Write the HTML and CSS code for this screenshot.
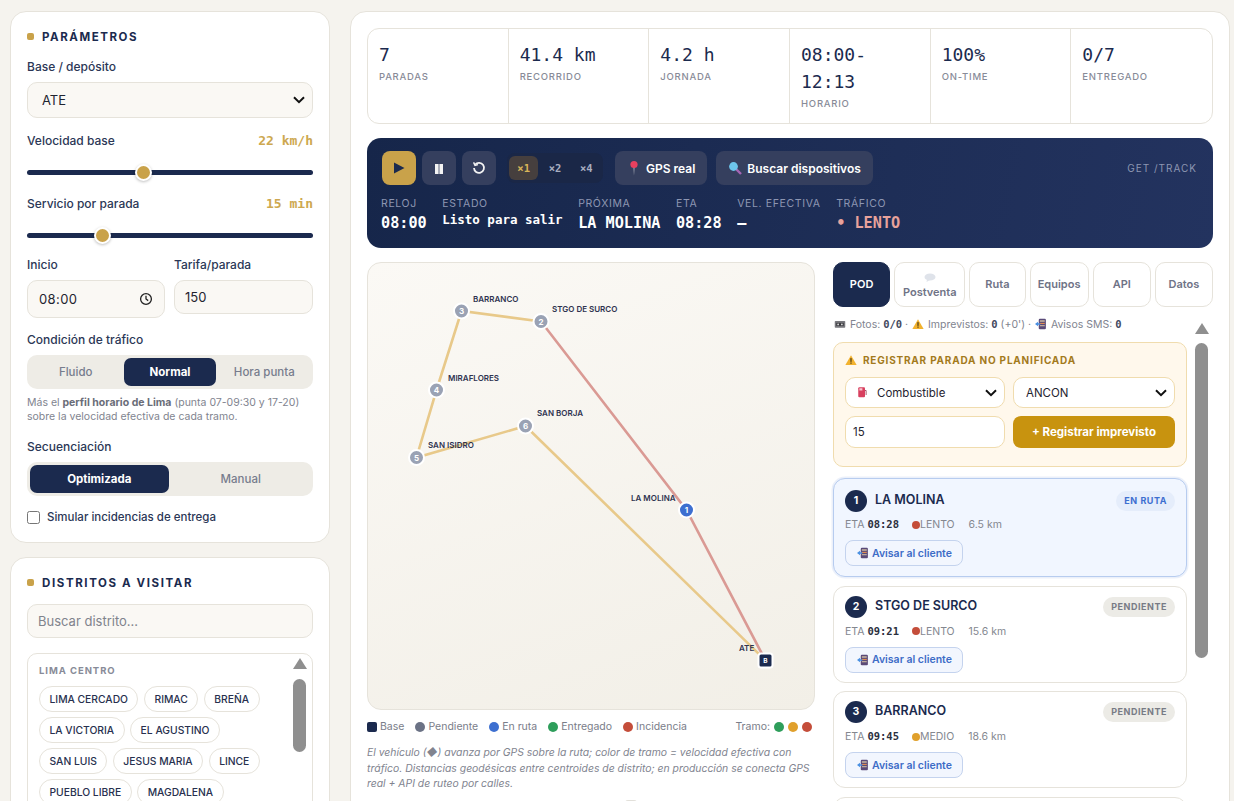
FILE: index.html
```html
<!doctype html>
<html lang="es">
<head>
<meta charset="utf-8" />
<meta name="viewport" content="width=device-width,initial-scale=1" />
<title>Ruteo Lima</title>
<link rel="stylesheet" href="styles.css">
</head>
<body>

<svg class="sprite" aria-hidden="true">
  <symbol id="i-warn" viewBox="0 0 16 16"><path d="M8 1.5 15.5 14.5H.5Z" fill="#f2b22e"/><rect x="7.2" y="5.5" width="1.6" height="5" fill="#4a3a16"/><rect x="7.2" y="11.3" width="1.6" height="1.7" fill="#4a3a16"/></symbol>
  <symbol id="i-phone" viewBox="0 0 16 16"><rect x="5" y="1" width="9.5" height="14" rx="1.5" fill="#5a4a78"/><rect x="6.5" y="3" width="6.5" height="2" fill="#c9b8a0"/><rect x="6.5" y="6.5" width="6.5" height="1.5" fill="#e08a50"/><rect x="6.5" y="9.5" width="6.5" height="1.5" fill="#c9b8a0"/><path d="M0 8 4 5V7H7V9H4V11Z" fill="#4a90e2"/></symbol>
  <symbol id="i-tape" viewBox="0 0 16 16"><rect x="1" y="4" width="14" height="9" rx="1" fill="#77777c"/><rect x="3" y="6.5" width="10" height="4" fill="#3c3c40"/><circle cx="5.5" cy="8.5" r="1.2" fill="#ddd"/><circle cx="10.5" cy="8.5" r="1.2" fill="#ddd"/></symbol>
  <symbol id="i-fuel" viewBox="0 0 16 16"><rect x="3" y="1.5" width="9" height="13.5" rx="1.5" fill="#d8405f"/><rect x="4.5" y="3" width="4" height="3" fill="#f7c4cf"/><path d="M12 6h1.5v6" stroke="#8a2a40" stroke-width="1" fill="none"/></symbol>
</svg>

<div class="app">

  <aside class="side">
    <section class="card">
      <h2 class="sec-title"><i class="sec-dot"></i>Parámetros</h2>

      <label class="lbl">Base / depósito</label>
      <select class="fld sel-base"><option>ATE</option></select>

      <div class="lbl-row"><label class="lbl">Velocidad base</label><span class="val">22 km/h</span></div>
      <input class="range" type="range" min="10" max="40" value="22">

      <div class="lbl-row"><label class="lbl">Servicio por parada</label><span class="val">15 min</span></div>
      <input class="range" type="range" min="5" max="45" value="15">

      <div class="two">
        <div>
          <label class="lbl">Inicio</label>
          <div class="fld time-fld"><span>08:00</span>
            <svg width="14" height="14" viewBox="0 0 14 14" fill="none" stroke="#222" stroke-width="1.3"><circle cx="7" cy="7" r="5.4"/><path d="M7 3.8V7l2.2 1.6"/></svg>
          </div>
        </div>
        <div>
          <label class="lbl">Tarifa/parada</label>
          <input class="fld num-fld" value="150">
        </div>
      </div>

      <label class="lbl lbl-gap">Condición de tráfico</label>
      <div class="seg seg-3">
        <button>Fluido</button><button class="on">Normal</button><button>Hora punta</button>
      </div>
      <p class="help">Más el <b>perfil horario de Lima</b> (punta 07-09:30 y 17-20) sobre la velocidad efectiva de cada tramo.</p>

      <label class="lbl lbl-gap2">Secuenciación</label>
      <div class="seg seg-2">
        <button class="on">Optimizada</button><button>Manual</button>
      </div>
      <label class="check"><input type="checkbox">Simular incidencias de entrega</label>
    </section>

    <section class="card">
      <h2 class="sec-title sec-tight"><i class="sec-dot"></i>Distritos a visitar</h2>
      <input class="fld search" placeholder="Buscar distrito...">
      <div class="dist-box">
        <div class="dist-list">
          <div class="zone">Lima Centro</div>
          <div class="chips">
            <span class="chip">LIMA CERCADO</span><span class="chip">RIMAC</span><span class="chip">BREÑA</span>
            <span class="chip">LA VICTORIA</span><span class="chip">EL AGUSTINO</span>
            <span class="chip">SAN LUIS</span><span class="chip">JESUS MARIA</span><span class="chip">LINCE</span>
            <span class="chip">PUEBLO LIBRE</span><span class="chip">MAGDALENA</span>
          </div>
        </div>
        <div class="sbar sbar-small"><i class="sbar-up"></i><i class="sbar-thumb"></i></div>
      </div>
    </section>
  </aside>

  <main class="card main">
    <div class="kpis">
      <div class="kpi"><b>7</b><span>Paradas</span></div>
      <div class="kpi"><b>41.4 km</b><span>Recorrido</span></div>
      <div class="kpi"><b>4.2 h</b><span>Jornada</span></div>
      <div class="kpi"><b>08:00-<br>12:13</b><span>Horario</span></div>
      <div class="kpi"><b>100%</b><span>On-time</span></div>
      <div class="kpi"><b>0/7</b><span>Entregado</span></div>
    </div>

    <div class="player">
      <div class="ctrl-row">
        <button class="pbtn play"><svg width="12" height="12" viewBox="0 0 12 12"><path d="M1 .5 11.5 6 1 11.5Z" fill="#1b2a4e"/></svg></button>
        <button class="pbtn"><svg width="12" height="12" viewBox="0 0 12 12" fill="#f3f3f3"><rect x="2" y="2" width="3.6" height="10"/><rect x="6.4" y="2" width="3.6" height="10"/></svg></button>
        <button class="pbtn"><svg width="14" height="14" viewBox="0 0 14 14" fill="none" stroke="#f3f3f3" stroke-width="1.8"><path d="M3.2 3.6A5 5 0 1 1 2 7"/><path d="M1.6 1.4 3 4.4l3-.8" stroke-width="1.4"/></svg></button>
        <div class="speed"><span class="on">×1</span><span>×2</span><span>×4</span></div>
        <button class="pill"><svg width="14" height="16" viewBox="0 0 14 16"><path d="M6.4 7h1.2L7 15.5Z" fill="#b0b4c0"/><circle cx="7" cy="4.5" r="3.6" fill="#e8405f"/></svg>GPS real</button>
        <button class="pill"><svg width="14" height="14" viewBox="0 0 14 14"><path d="M8 8l5 5" stroke="#a565b5" stroke-width="2.4"/><circle cx="5.5" cy="5.5" r="4.4" fill="#6cc4ea"/></svg>Buscar dispositivos</button>
        <span class="endpoint">GET /TRACK</span>
      </div>
      <div class="read-row">
        <div class="read"><span>Reloj</span><b>08:00</b></div>
        <div class="read"><span>Estado</span><b class="sm">Listo para salir</b></div>
        <div class="read"><span>Próxima</span><b>LA MOLINA</b></div>
        <div class="read"><span>ETA</span><b>08:28</b></div>
        <div class="read"><span>Vel. efectiva</span><b>–</b></div>
        <div class="read"><span>Tráfico</span><b class="slow">• LENTO</b></div>
      </div>
    </div>

    <div class="lower">
      <div class="map-col">
        <div class="map">
          <svg class="route" width="446" height="446" viewBox="368 263 446 446">
            <g fill="none" stroke-width="2.6">
              <path d="M765.5 660.5 686.5 510 541 321.5" stroke="#da9a94"/>
              <path d="M541 321.5 461.5 311 436.5 390 416.5 457.5 525.5 426 765.5 660.5" stroke="#e8c98a"/>
            </g>
            <g class="node" fill="#9aa2b4">
              <circle cx="541" cy="321.5" r="7.5"/><circle cx="461.5" cy="311" r="7.5"/>
              <circle cx="436.5" cy="390" r="7.5"/><circle cx="416.5" cy="457.5" r="7.5"/>
              <circle cx="525.5" cy="426" r="7.5"/>
              <circle cx="686.5" cy="510" r="7.5" fill="#3d6fd0"/>
              <rect x="758.5" y="653.5" width="14" height="14" rx="2.5" fill="#1b2a4e"/>
            </g>
            <g class="num">
              <text x="686.5" y="513">1</text><text x="541" y="324.5">2</text><text x="461.5" y="314">3</text>
              <text x="436.5" y="393">4</text><text x="416.5" y="460.5">5</text><text x="525.5" y="429">6</text>
              <text class="b" x="765.5" y="663">B</text>
            </g>
            <g class="tag">
              <text x="473" y="302">BARRANCO</text><text x="552" y="312">STGO DE SURCO</text>
              <text x="448" y="381">MIRAFLORES</text><text x="537" y="416">SAN BORJA</text>
              <text x="428" y="448">SAN ISIDRO</text><text x="631" y="501">LA MOLINA</text>
              <text x="739" y="651">ATE</text>
            </g>
          </svg>
        </div>
        <div class="legend">
          <span class="leg"><i class="sq"></i>Base</span>
          <span class="leg"><i style="background:#6b7285"></i>Pendiente</span>
          <span class="leg"><i style="background:#3d6fd0"></i>En ruta</span>
          <span class="leg"><i style="background:#2e9e5b"></i>Entregado</span>
          <span class="leg"><i style="background:#c44d3a"></i>Incidencia</span>
          <span class="leg tramo">Tramo: <i style="background:#2e9e5b"></i><i style="background:#e0a02c"></i><i style="background:#c44d3a"></i></span>
        </div>
        <p class="note">El vehículo (◆) avanza por GPS sobre la ruta; color de tramo = velocidad efectiva con tráfico. Distancias geodésicas entre centroides de distrito; en producción se conecta GPS real + API de ruteo por calles.</p>
        <div class="map-foot"></div>
      </div>

      <div class="right-col">
        <div class="tabs">
          <button class="on">POD</button>
          <button class="tab-post"><svg width="12" height="9" viewBox="0 0 12 9"><ellipse cx="6" cy="4" rx="5.5" ry="3.6" fill="#dfe3ea"/><path d="M3 6.5 2.5 9 6 7Z" fill="#dfe3ea"/></svg>Postventa</button>
          <button>Ruta</button><button>Equipos</button><button>API</button><button>Datos</button>
        </div>
        <div class="pane">
          <div class="pane-list">
            <div class="stats">
              <svg class="ico"><use href="#i-tape"/></svg> Fotos: <b>0/0</b> · <svg class="ico"><use href="#i-warn"/></svg> Imprevistos: <b>0</b> (+0') · <svg class="ico"><use href="#i-phone"/></svg> Avisos SMS: <b>0</b>
            </div>

            <div class="alert">
              <div class="alert-title"><svg class="ico"><use href="#i-warn"/></svg>Registrar parada no planificada</div>
              <div class="alert-grid">
                <div class="fake-sel"><select class="fld sel-sm pad-ico"><option>Combustible</option></select><svg class="ico sel-ico"><use href="#i-fuel"/></svg></div>
                <select class="fld sel-sm"><option>ANCON</option></select>
                <input class="fld in-sm" value="15">
                <button class="reg">+ Registrar imprevisto</button>
              </div>
            </div>

            <div class="stops">
              <div class="stop active">
                <div class="stop-top"><i class="circ">1</i><strong>LA MOLINA</strong><span class="badge blue">En ruta</span></div>
                <div class="meta">ETA <b>08:28</b> <i class="dot" style="background:#c44d3a"></i>LENTO <em>6.5 km</em></div>
                <button class="notify"><svg class="ico"><use href="#i-phone"/></svg>Avisar al cliente</button>
              </div>
              <div class="stop">
                <div class="stop-top"><i class="circ">2</i><strong>STGO DE SURCO</strong><span class="badge">Pendiente</span></div>
                <div class="meta">ETA <b>09:21</b> <i class="dot" style="background:#c44d3a"></i>LENTO <em>15.6 km</em></div>
                <button class="notify"><svg class="ico"><use href="#i-phone"/></svg>Avisar al cliente</button>
              </div>
              <div class="stop">
                <div class="stop-top"><i class="circ">3</i><strong>BARRANCO</strong><span class="badge">Pendiente</span></div>
                <div class="meta">ETA <b>09:45</b> <i class="dot" style="background:#e0a02c"></i>MEDIO <em>18.6 km</em></div>
                <button class="notify"><svg class="ico"><use href="#i-phone"/></svg>Avisar al cliente</button>
              </div>
              <div class="stop stop-next"></div>
            </div>
          </div>
          <div class="sbar"><i class="sbar-up"></i><i class="sbar-thumb"></i></div>
        </div>
      </div>
    </div>
  </main>

</div>

</body>
</html>
```

FILE: styles.css
```css
*{box-sizing:border-box}
html,body{height:100%}
body{margin:0;background:#f5f3ee;font-family:Inter,"Noto Sans",Arial,sans-serif;color:#1b2a4e;overflow:hidden}
button,input,select{font-family:inherit}
.sprite{display:none}
.ico{width:12px;height:12px;vertical-align:-2px}

.app{display:grid;grid-template-columns:320px 880px;gap:20px;padding:11px 0 0 10px;height:801px;overflow:hidden;align-items:start}
.side{display:flex;flex-direction:column;gap:14px}
.card{background:#fff;border:1px solid #e6e3db;border-radius:16px;padding:16px}

.sec-title{margin:0 0 14px;height:17px;display:flex;align-items:center;font-size:11.5px;font-weight:700;letter-spacing:.135em;text-transform:uppercase;color:#1b2a4e}
.sec-tight{margin-bottom:13px;letter-spacing:.14em}
.sec-dot{width:7px;height:7px;border-radius:2px;background:#c9a24a;margin-right:8px}

.lbl{display:block;font-size:12px;line-height:15px;font-weight:500;color:#2b3756;margin-bottom:8px}
.lbl-row{display:flex;justify-content:space-between;align-items:center;margin-top:15px}
.lbl-row .lbl{margin:0}
.val{font:700 13px/15px "DejaVu Sans Mono",monospace;color:#cda850}
.lbl-gap{margin:14px 0 8px}
.lbl-gap2{margin:15px 0 8px}

.fld{display:block;width:100%;background:#faf8f4;border:1px solid #e6e3db;border-radius:10px;font-size:13px;color:#1f2430;outline:none}
select.fld{-webkit-appearance:none;appearance:none;background-image:url("data:image/svg+xml,%3Csvg xmlns='http://www.w3.org/2000/svg' width='12' height='8' viewBox='0 0 12 8'%3E%3Cpath d='M1 1.2 6 6.2 11 1.2' fill='none' stroke='%23111' stroke-width='2'/%3E%3C/svg%3E");background-repeat:no-repeat;background-position:right 7px center}
.sel-base{height:36px;padding:0 14px}
.two{display:grid;grid-template-columns:138px 139px;gap:9px;margin-top:13px;align-items:start}
.two .lbl{margin-bottom:8px}
.time-fld{height:38px;padding:0 11px;display:flex;align-items:center;justify-content:space-between;letter-spacing:.03em}
.num-fld{height:34px;padding:0 10px}

.range{-webkit-appearance:none;appearance:none;display:block;width:100%;height:17px;margin:16px 0 0;background:transparent}
.range::-webkit-slider-runnable-track{height:5px;border-radius:3px;background:#1b2a4e}
.range::-webkit-slider-thumb{-webkit-appearance:none;width:17px;height:17px;margin-top:-6px;border-radius:50%;background:#c9a24a;border:2px solid #fff;box-shadow:0 1px 3px rgba(0,0,0,.25)}

.seg{display:grid;gap:3px;padding:3px;background:#eeece6;border-radius:10px;height:34px}
.seg-3{grid-template-columns:repeat(3,1fr)}
.seg-2{grid-template-columns:repeat(2,1fr)}
.seg button{border:0;background:none;border-radius:7px;font-size:11.5px;font-weight:500;color:#777c8d;padding:0}
.seg button.on{background:#1b2a4e;color:#fff;font-weight:700}
.help{margin:7px 0 0;font-size:10.5px;line-height:14px;color:#81848f}
.help b{font-weight:700;color:#6a6d78}
.check{display:flex;align-items:center;gap:7px;margin:13px 0 1px;font-size:11.5px;line-height:16px;font-weight:500;color:#2b3756}
.check input{width:13px;height:13px;margin:0}

.search{height:34px;padding:0 10px;margin-bottom:15px;font-size:13px}
.search::placeholder{color:#80838c}
.dist-box{display:flex;border:1px solid #e6e3db;border-radius:10px;height:200px;padding:11px 5px 0 11px}
.dist-list{flex:1}
.zone{font-size:9.5px;line-height:12px;font-weight:700;letter-spacing:.1em;text-transform:uppercase;color:#888b98}
.chips{display:flex;flex-wrap:wrap;gap:5px 5.5px;margin-top:8.5px;padding-right:20px}
.chip{height:26px;line-height:24px;padding:0 9.5px;border:1px solid #e6e3db;border-radius:13px;font-size:10.3px;font-weight:500;color:#27304e;white-space:nowrap}

.sbar{flex:none;width:15px;margin:0 4px 0 7px;padding-top:5px;display:flex;flex-direction:column;align-items:center}
.sbar-up{width:0;height:0;border:7.5px solid transparent;border-top:0;border-bottom:11px solid #8f8f8f}
.sbar-thumb{width:13px;height:315px;margin-top:9px;border-radius:7px;background:#8f8f8f}
.sbar-small{margin:-7px 0 0 0;padding-top:0;width:15px}
.sbar-small .sbar-thumb{height:73px;margin-top:10px}

.main{height:860px;padding:16px}
.kpis{display:grid;grid-template-columns:repeat(6,1fr);border:1px solid #e6e3db;border-radius:12px;height:96px}
.kpi{padding:12px 11px 0;border-right:1px solid #e6e3db}
.kpi:last-child{border-right:0}
.kpi b{display:block;font:500 18px/27px "DejaVu Sans Mono",monospace;color:#1b2a4e}
.kpi span{display:block;margin-top:1px;font-size:9.5px;line-height:15px;font-weight:500;letter-spacing:.08em;text-transform:uppercase;color:#888b98}

.player{margin-top:14px;height:110px;padding:13px 16px 0 15px;border-radius:14px;background:linear-gradient(100deg,#16264a,#23335f)}
.ctrl-row{display:flex;align-items:center;gap:6px;height:34px}
.pbtn{width:34px;height:34px;border:0;border-radius:8px;background:#353f5e;display:flex;align-items:center;justify-content:center;padding:0}
.pbtn.play{background:#c9a24a}
.speed{display:flex;align-items:center;gap:2px;margin:0 6px 0 5px;height:30px;padding:0 2px;width:96px;background:#1a2747;border-radius:8px}
.speed span{flex:1;height:24px;line-height:24px;text-align:center;font:700 10.5px/24px "DejaVu Sans Mono",monospace;color:#a8aec0;border-radius:6px}
.speed span.on{background:#463f3e;color:#d9b659}
.pill{display:flex;align-items:center;gap:5px;height:34px;padding:0 12px;margin-right:3px;border:0;border-radius:8px;background:#353f5e;color:#fff;font-size:12px;font-weight:600}
.endpoint{margin-left:auto;font-size:10px;letter-spacing:.1em;color:#8d96b2}
.read-row{display:flex;gap:15.5px;margin:12px 0 0 -1px}
.read span{display:block;font-size:10.5px;line-height:13px;letter-spacing:.06em;text-transform:uppercase;color:#8d96b2;margin-bottom:3px}
.read b{display:block;font:700 15.2px/20px "DejaVu Sans Mono",monospace;color:#fff;white-space:nowrap}
.read b.sm{font-size:12.5px;line-height:16px;margin-top:-1px}
.read b.slow{color:#e8a29b}

.lower{display:grid;grid-template-columns:448px 380px;gap:18px;margin-top:14px}
.map{height:448px;border:1px solid #e6e3db;border-radius:14px;background:linear-gradient(160deg,#fbf9f5,#f2efe7);overflow:hidden}
.route{display:block}
.node circle,.node rect{stroke:#fff;stroke-width:2}
.num text{font-size:8px;font-weight:700;fill:#fff;text-anchor:middle}
.num text.b{font-size:6.5px}
.tag text{font-size:8px;font-weight:600;fill:#2f3350}
.legend{display:flex;align-items:center;gap:11px;margin-top:10px;font-size:10.5px;line-height:14px;color:#7a7d89}
.leg{display:flex;align-items:center;gap:3px}
.leg i{width:10px;height:10px;border-radius:50%}
.leg i.sq{border-radius:2px;background:#1b2a4e}
.tramo{margin-left:auto;margin-right:3px}
.tramo i{margin-left:1px}
.note{margin:11px 0 0;font-size:10.4px;line-height:15.5px;font-style:italic;color:#81848f}
.map-foot{width:12px;height:4px;margin:8px 0 0 258px;border-radius:3px 3px 0 0;background:#e2e0da}

.tabs{display:grid;grid-template-columns:57fr 71fr 56fr 59fr 58fr 58fr;gap:4px;height:45px}
.tabs button{padding:0 0 2px;border:1px solid #e6e3db;border-radius:10px;background:#fff;font-size:11px;font-weight:600;color:#6f7386}
.tabs button.on{background:#1b2a4e;border-color:#1b2a4e;color:#fff}
.tabs .tab-post{padding:2px 0 0}
.tab-post svg{display:block;margin:0 auto 3px}

.pane{display:flex;margin-top:11px}
.pane-list{flex:1;min-width:0}
.stats{height:12px;line-height:12px;font-size:10.5px;color:#81848f;white-space:nowrap}
.stats b{font:700 10.5px "DejaVu Sans Mono",monospace;color:#444a60}
.stats .ico{margin:0 1px}

.alert{margin-top:12px;height:125px;padding:11px;background:#fff8ec;border:1px solid #f0dcae;border-radius:10px}
.alert-title{font-size:10px;line-height:12px;font-weight:700;letter-spacing:.08em;text-transform:uppercase;color:#a37a1c}
.alert-title .ico{margin-right:6px}
.alert-grid{display:grid;grid-template-columns:160px 162px;gap:8px;margin-top:11px}
.fake-sel{position:relative}
.sel-ico{position:absolute;left:11px;top:9px}
.sel-sm{height:31px;padding:0 12px;font-size:11.5px;background-color:#fff;border-color:#f0dcae}
.pad-ico{padding-left:31px}
.in-sm{height:32px;padding:0 7px;font-size:11.5px;background:#fff;border-color:#f0dcae}
.reg{height:32px;border:0;border-radius:8px;background:#c8930f;color:#fff;font-size:11.5px;font-weight:700}

.stops{display:flex;flex-direction:column;gap:8.5px;margin-top:11px}
.stop{padding:9px 11px;border:1px solid #e6e3db;border-radius:12px;background:#fff}
.stop.active{padding:11px 11px 10px;background:#f1f6ff;border-color:#b7ccef;box-shadow:0 0 0 1.5px rgba(61,111,208,.1)}
.stop-next{height:60px}
.stop-top{display:flex;align-items:center;height:22px}
.circ{flex:none;width:22px;height:22px;border-radius:50%;background:#1b2a4e;color:#fff;font-style:normal;font-size:10.5px;font-weight:700;line-height:22px;text-align:center}
.stop-top strong{margin:0 0 3px 8px;font-size:12.5px;font-weight:600;color:#1b2a4e}
.badge{margin-left:auto;height:20px;line-height:20px;padding:0 8px;border-radius:10px;background:#ecebe6;font-size:9px;font-weight:700;letter-spacing:.06em;text-transform:uppercase;color:#787b85}
.badge.blue{background:#e5edfb;color:#3d6fd0}
.meta{margin-top:7px;font-size:10.5px;line-height:13px;color:#84878f}
.stop.active .meta{margin-top:6px}
.meta b{font:700 10.5px "DejaVu Sans Mono",monospace;color:#2b2f3d;margin-right:10px}
.meta em{font-style:normal;margin-left:11px}
.dot{display:inline-block;width:8px;height:8px;border-radius:50%;vertical-align:-.5px}
.notify{display:flex;align-items:center;gap:3px;height:26px;width:118px;margin-top:9px;padding:0 0 0 11px;border:1px solid #c4d3ee;border-radius:8px;background:#f2f6fe;color:#3d6cc7;font-size:10.5px;font-weight:600}
```
